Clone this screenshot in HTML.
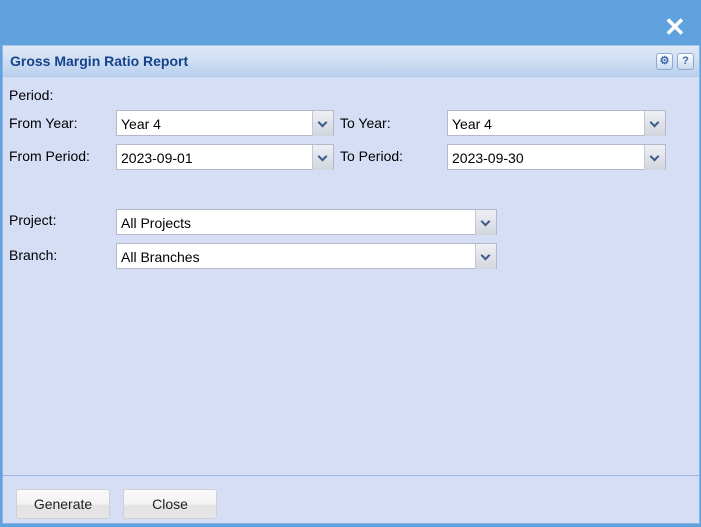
<!DOCTYPE html>
<html><head><style>
body{margin:0;width:701px;height:527px;background:#5fa2dd;font-family:"Liberation Sans",Arial,sans-serif;font-size:14px;position:relative;overflow:hidden}
.x{position:absolute;left:664px;top:14px;color:#fff;font-size:26px;font-weight:bold;line-height:26px}
.panel{position:absolute;left:2px;top:45px;width:696px;height:477px;background:#d6def6;border:1px solid #8fb3e3;border-top:1px solid #a9c4ea}
.hdr{height:30px;background:linear-gradient(#dfe8f6,#d3e1f4 40%,#b9d0ee);border-bottom:1px solid #b3cae9;color:#15428b;font-weight:bold;font-size:14px;line-height:30px;padding-left:7px}
.tb{position:absolute;top:7px;width:15px;height:15px;border:1px solid #8ea9d0;border-radius:3px;background:linear-gradient(#fff,#c9d9ef);font-size:11px;color:#3f6aa6;text-align:center;line-height:15px;font-weight:bold}
.l{position:absolute;font-size:14px;color:#000}
.c{position:absolute;height:26px;border:1px solid #b5b8c8;background:#fff;box-sizing:border-box}
.c span{position:absolute;left:4px;top:5px;font-size:14px}
.c i{position:absolute;right:0;top:0;width:20px;height:25px;background:linear-gradient(#eef0f4,#d1d5de);border-left:1px solid #c5c8d2}
.c i:after{content:"";position:absolute;left:6px;top:8px;width:5px;height:5px;border-right:2px solid #3c5a8a;border-bottom:2px solid #3c5a8a;transform:rotate(45deg)}
.ft{position:absolute;left:0;top:429px;width:696px;border-top:1px solid #9fb8df}
.b{position:absolute;top:443px;width:92px;height:28px;border:1px solid #d0d0d0;border-radius:3px;background:linear-gradient(#fafafa,#f3f3f3 50%,#e3e3e3 55%,#e6e6e6);text-align:center;line-height:28px;font-size:14px;color:#222}
</style></head><body>
<div class="x">✕</div>
<div class="panel">
<div class="hdr">Gross Margin Ratio Report</div>
<div class="tb" style="left:653px">⚙</div><div class="tb" style="left:674px">?</div>
<div class="l" style="left:6px;top:41px">Period:</div>
<div class="l" style="left:6px;top:69px">From Year:</div>
<div class="c" style="left:113px;top:64px;width:218px"><span>Year 4</span><i></i></div>
<div class="l" style="left:337px;top:69px">To Year:</div>
<div class="c" style="left:444px;top:64px;width:219px"><span>Year 4</span><i></i></div>
<div class="l" style="left:6px;top:102px">From Period:</div>
<div class="c" style="left:113px;top:98px;width:218px"><span>2023-09-01</span><i></i></div>
<div class="l" style="left:337px;top:102px">To Period:</div>
<div class="c" style="left:444px;top:98px;width:219px"><span>2023-09-30</span><i></i></div>
<div class="l" style="left:6px;top:166px">Project:</div>
<div class="c" style="left:113px;top:163px;width:381px"><span>All Projects</span><i></i></div>
<div class="l" style="left:6px;top:201px">Branch:</div>
<div class="c" style="left:113px;top:197px;width:381px"><span>All Branches</span><i></i></div>
<div class="ft"></div>
<div class="b" style="left:13px">Generate</div>
<div class="b" style="left:120px">Close</div>
</div>
</body></html>
